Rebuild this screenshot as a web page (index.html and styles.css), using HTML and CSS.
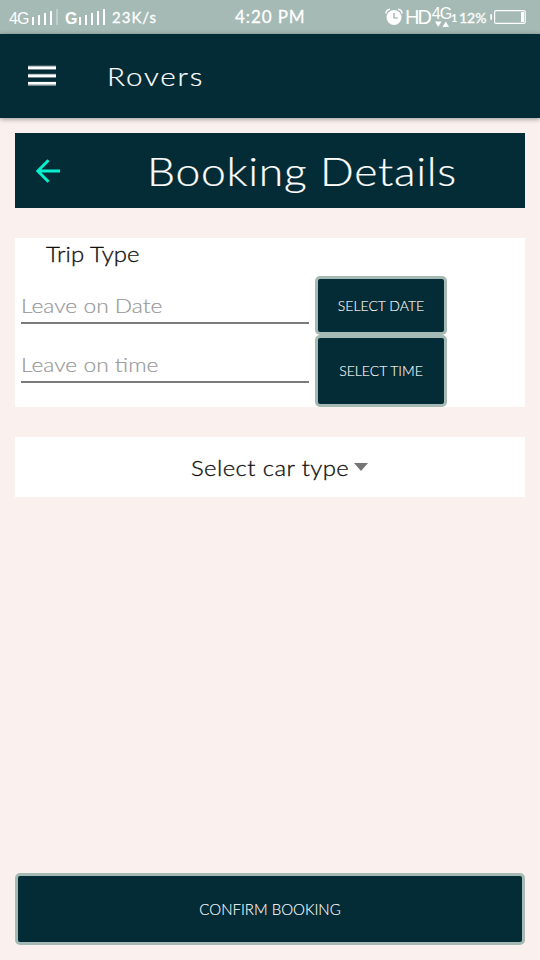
FILE: index.html
```html
<!DOCTYPE html>
<html lang="en">
<head>
<meta charset="utf-8">
<title>Rovers</title>
<link rel="stylesheet" href="styles.css">
</head>
<body>
<header class="status">
  <div class="status-left">
    <span class="net">4G</span>
    <svg class="bars bars-one" width="28" height="18" viewBox="0 0 28 18"><path d="M1 9h2v8H1zM7 7h2v10H7zM13 5h2v12h-2zM19 3h2v14h-2z" fill="#fff"/><path d="M25 1h2v16h-2z" fill="#fff" opacity=".3"/></svg>
    <span class="net net-g">G</span>
    <svg class="bars" width="28" height="18" viewBox="0 0 28 18"><path d="M1 9h2v8H1zM7 7h2v10H7zM13 5h2v12h-2zM19 3h2v14h-2zM25 1h2v16h-2z" fill="#fff"/></svg>
    <span class="speed">23K/s</span>
  </div>
  <span class="clock">4:20 PM</span>
  <div class="status-right">
    <svg width="18" height="18" viewBox="0 0 18 18"><circle cx="9" cy="9.500" r="7.500" fill="#fff"/><path d="M1 5.500A4 4 0 0 1 5 1.200M17 5.500a4 4 0 0 0-4-4.300" stroke="#fff" stroke-width="1.600" fill="none"/><path d="M9 5v5h4" stroke="#8fa9a3" stroke-width="1.200" fill="none"/></svg>
    <span class="hd">HD</span>
    <span class="data"><span class="data-net">4G</span><svg width="14" height="6" viewBox="0 0 14 6"><path d="M0 .5h6.500L3.250 6zM7.500 6H14L10.750.5z" fill="#fff"/></svg></span>
    <span class="sim">1</span>
    <span class="percent">12%</span>
    <svg class="battery" width="36" height="14" viewBox="0 0 36 14"><path d="M2 5H1v4h1" stroke="#fff" stroke-width="1.300" fill="#fff"/><rect x="4.600" y=".6" width="30.600" height="12.800" rx="1.500" fill="none" stroke="#fff" stroke-width="1.200"/><path d="M31 2h3v10h-3z" fill="#fff"/></svg>
  </div>
</header>
<nav class="appbar">
  <svg class="menu" width="28" height="22" viewBox="0 0 28 22"><path d="M0 .5h28v4.500H0zM0 8.700h28v4.300H0zM0 16.700h28v4.300H0z" fill="#71868b"/><path d="M0 1.500h28v2.500H0zM0 9.500h28v2.500H0zM0 17h28v2.600H0z" fill="#fff"/></svg>
  <span class="brand">Rovers</span>
</nav>
<main class="page">
  <section class="title">
    <svg class="back" width="24" height="24" viewBox="0 0 24 24"><path d="M24 12H2M12.500 1.300L1.800 12l10.700 10.700" fill="none" stroke="#06f0d0" stroke-width="3"/></svg>
    <h1>Booking Details</h1>
  </section>
  <section class="trip">
    <h2><span class="trip-label">Trip Type</span></h2>
    <div class="trip-row">
      <div class="field"><span class="hint hint-date">Leave on Date</span></div>
      <button class="btn btn-date"><span>SELECT DATE</span></button>
    </div>
    <div class="trip-row">
      <div class="field"><span class="hint hint-time">Leave on time</span></div>
      <button class="btn btn-time"><span>SELECT TIME</span></button>
    </div>
  </section>
  <section class="car">
    <span class="car-label">Select car type</span>
    <svg width="14" height="8" viewBox="0 0 14 8"><path d="M0 0h14L7 8z" fill="#757575"/></svg>
  </section>
  <button class="btn confirm"><span>CONFIRM BOOKING</span></button>
</main>
</body>
</html>
```
FILE: styles.css
```css
* { box-sizing: border-box; }
body {
  margin: 0;
  width: 540px;
  height: 960px;
  display: flex;
  flex-direction: column;
  overflow: hidden;
  background: #faf1ef;
  font-family: Lato, "Liberation Sans", sans-serif;
  font-weight: 300;
}
span, h1, h2 { white-space: nowrap; }
.status {
  display: flex;
  height: 34px;
  flex: none;
  background: #a6bab5;
  color: #fff;
  font-weight: 400;
}
.status-left { display: flex; align-items: center; width: 235px; padding-left: 9px; }
.net { width: 22px; font: 16px/20px "Liberation Sans", sans-serif; letter-spacing: -1px; padding-top: 4px; }
.net-g { width: 13px; font-weight: 700; }
.bars { margin-right: 6px; }
.speed { font-size: 15px; font-weight: 400; letter-spacing: 1px; -webkit-text-stroke: .3px #fff; }
.clock { width: 150px; font-size: 17px; line-height: 34px; font-weight: 400; letter-spacing: .9px; -webkit-text-stroke: .3px #fff; }
.status-right { display: flex; align-items: center; }
.hd { width: 27px; margin-left: 2px; font: 20px/34px "Liberation Sans", sans-serif; letter-spacing: -2px; }
.data { display: flex; flex-direction: column; align-items: center; width: 19px; }
.data-net { font: 16px/14px "Liberation Sans", sans-serif; letter-spacing: -1px; }
.sim { width: 8px; font-size: 11px; font-weight: 700; }
.percent { width: 31px; font-size: 14px; font-weight: 400; -webkit-text-stroke: .3px #fff; }
.appbar {
  display: flex;
  align-items: center;
  flex: none;
  height: 84px;
  padding-left: 28px;
  background: #042c36;
  color: #fff;
  box-shadow: 0 1px 5px rgba(0, 0, 0, .4);
}
/* Widened letterforms for the display text */
.brand, h1, .trip-label, .hint, .car-label { transform: scaleX(1.14); transform-origin: left; }
.brand { margin-left: 51px; font-size: 26px; letter-spacing: 1.6px; -webkit-text-stroke: .2px #fff; }
.page { display: flex; flex-direction: column; flex: 1; padding: 15px; }
.title { display: flex; align-items: center; height: 75px; padding-left: 21px; background: #042c36; color: #fff; }
h1 { margin: 0 0 0 87px; font-size: 39px; font-weight: 300; letter-spacing: .6px; -webkit-text-stroke: .2px #fff; }
.trip { height: 169px; margin-top: 30px; background: #fff; }
h2 { height: 38px; margin: 0; padding-left: 31px; font-size: 21px; line-height: 31px; font-weight: 300; color: #111; }
.trip-label { display: inline-block; letter-spacing: .05px; -webkit-text-stroke: .3px #111; }
.trip-row { display: flex; }
.field { width: 288px; height: 48px; margin: 0 6px; border-bottom: 2px solid #7b7b7b; padding-top: 13px; }
.hint { display: block; font-size: 20px; line-height: 32px; color: #999; -webkit-text-stroke: .2px #999; }
.btn {
  display: flex;
  align-items: center;
  justify-content: center;
  padding: 0 0 1px;
  border: 3px solid #a6bab5;
  border-radius: 5px;
  background: #042c36;
  color: #fff;
  font: 300 14px Lato, sans-serif;
  -webkit-text-stroke: .1px #fff;
}
.btn-date { width: 132px; height: 59px; }
.btn-time { width: 132px; height: 72px; }
.car { display: flex; align-items: center; height: 60px; margin-top: 30px; padding-left: 176px; background: #fff; }
.car-label { width: 163px; font-size: 21px; color: #111; letter-spacing: .35px; -webkit-text-stroke: .3px #111; }
.confirm { width: 510px; height: 72px; margin-top: auto; font-size: 15px; }
```
